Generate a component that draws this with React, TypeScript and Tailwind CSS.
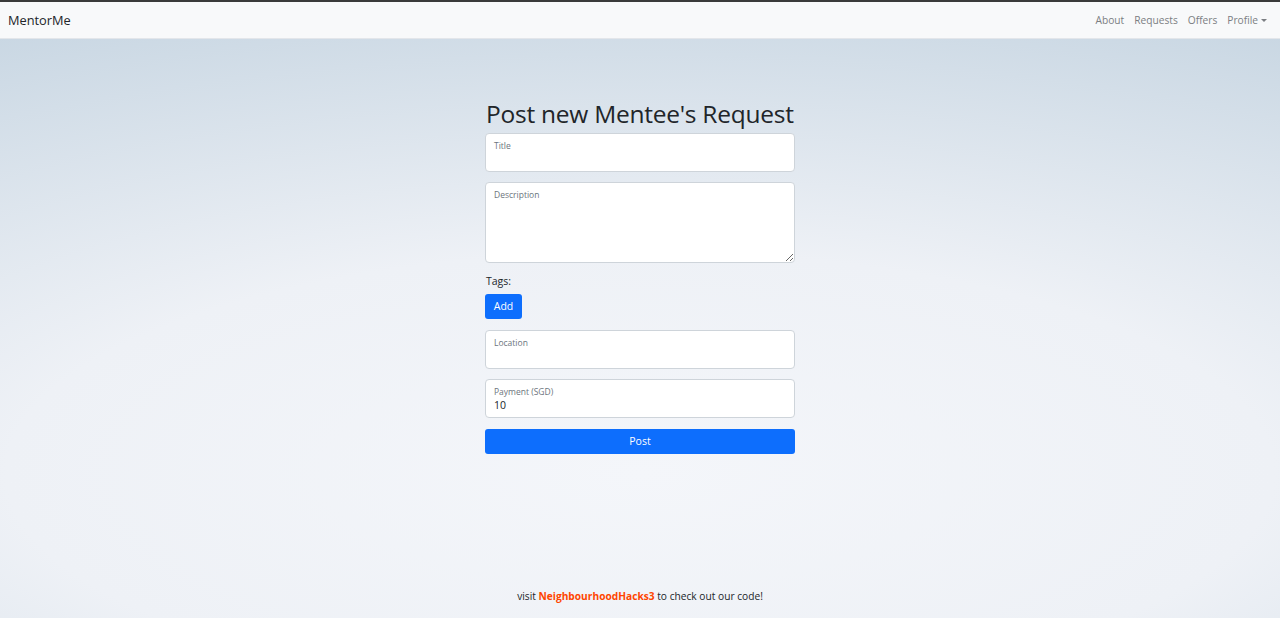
import { useState } from 'react';

const FloatingInput = ({ label, value, onChange }: { label: string; value: string; onChange: (v: string) => void }) => (
    <div className="relative h-[39px] bg-white border border-[#ced4da] rounded-[4px]">
        <label className="absolute left-[8px] top-[6px] text-[8.5px] leading-[12px] text-[#6c757d]">{label}</label>
        <input
            className="absolute left-0 top-[17px] w-full px-[8px] text-[10.5px] leading-[16px] text-[#212529] bg-transparent outline-none"
            value={value}
            onChange={(e) => onChange(e.target.value)}
        />
    </div>
);

const App = () => {
    const [title, setTitle] = useState('');
    const [description, setDescription] = useState('');
    const [location, setLocation] = useState('');
    const [payment, setPayment] = useState('10');

    const navLinks = ['About', 'Requests', 'Offers'];

    return (
        <div className="min-h-screen flex flex-col font-['Open_Sans',sans-serif] border-t-2 border-[#3a3a3a]">
            {/* Navbar */}
            <nav className="h-[37px] bg-[#f8f9fa] flex items-center justify-between pl-[8px] pr-[8px] pt-[1px] border-b border-[#e3e6ea]">
                <a href="#" className="text-[12.8px] text-[#212529]">MentorMe</a>
                <div className="flex items-center gap-[10px] text-[10.2px] text-[#7b7e82]">
                    {navLinks.map((link) => (
                        <a key={link} href="#" className="hover:text-[#444]">{link}</a>
                    ))}
                    <a href="#" className="flex items-center gap-[3px] pr-[5px]">
                        Profile
                        <span className="inline-block w-0 h-0 border-l-[3px] border-r-[3px] border-t-[3px] border-l-transparent border-r-transparent border-t-[#7b7e82]" />
                    </a>
                </div>
            </nav>

            {/* Main */}
            <main className="flex-1 flex flex-col items-center bg-[radial-gradient(ellipse_110%_85%_at_50%_75%,#f4f6fa_0%,#eef1f6_45%,#c9d7e3_100%)]">
                <div className="w-[310px] mt-[59px] flex flex-col">
                    <h2 className="text-[24.5px] leading-[32px] tracking-[-0.25px] text-[#212529] mb-[3px] ml-[1px] whitespace-nowrap">Post new Mentee's Request</h2>

                    <FloatingInput label="Title" value={title} onChange={setTitle} />

                    <div className="relative h-[81px] mt-[10px] bg-white border border-[#ced4da] rounded-[4px]">
                        <label className="absolute left-[8px] top-[6px] text-[8.5px] leading-[12px] text-[#6c757d]">Description</label>
                        <textarea
                            className="absolute inset-0 pt-[20px] px-[8px] w-full h-full text-[11px] bg-transparent outline-none rounded-[4px]"
                            value={description}
                            onChange={(e) => setDescription(e.target.value)}
                        />
                    </div>

                    <div className="mt-[11px] text-[10.5px] leading-[14px] text-[#212529] ml-[1px]">Tags:</div>
                    <div className="mt-[6px] flex">
                        <button className="h-[25px] w-[37px] bg-[#0d6efd] text-white text-[10.5px] rounded-[3px]">Add</button>
                    </div>

                    <div className="mt-[11px]">
                        <FloatingInput label="Location" value={location} onChange={setLocation} />
                    </div>
                    <div className="mt-[10px]">
                        <FloatingInput label="Payment (SGD)" value={payment} onChange={setPayment} />
                    </div>

                    <button className="mt-[11px] h-[25px] w-full bg-[#0d6efd] text-white text-[10.5px] rounded-[3px]">Post</button>
                </div>

                <footer className="mt-auto mb-[14px] text-[10.2px] text-[#212529]">
                    visit <a href="#" className="font-bold text-[#ff4500]">NeighbourhoodHacks3</a> to check out our code!
                </footer>
            </main>
        </div>
    );
};

export default App;
